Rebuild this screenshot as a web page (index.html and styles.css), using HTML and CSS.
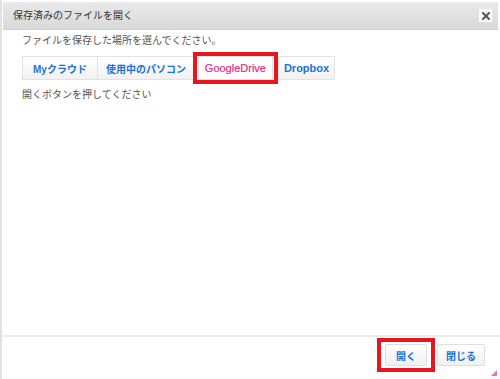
FILE: index.html
```html
<!DOCTYPE html>
<html lang="ja">
<head>
  <meta charset="UTF-8">
  <title>保存済みのファイルを開く</title>
  <link rel="stylesheet" href="styles.css">
</head>
<body>
  <div class="dialog">
    <div class="titlebar">
      <span class="title">保存済みのファイルを開く</span>
      <button class="close" title="閉じる">
        <svg width="8" height="8" viewBox="0 0 8 8">
          <path d="M1 1 L7 7 M7 1 L1 7" stroke="#555" stroke-width="2" stroke-linecap="square"/>
        </svg>
      </button>
    </div>

    <div class="content">
      <p class="lead">ファイルを保存した場所を選んでください。</p>
      <div class="tabs">
        <button class="tab">Myクラウド</button>
        <button class="tab pc">使用中のパソコン</button>
        <span class="mark">
          <button class="tab selected">GoogleDrive</button>
        </span>
        <button class="tab">Dropbox</button>
      </div>
      <p class="hint">開くボタンを押してください</p>
    </div>

    <div class="footer">
      <span class="mark">
        <button class="btn">開く</button>
      </span>
      <button class="btn">閉じる</button>
      <span class="grip"></span>
    </div>
  </div>
</body>
</html>
```

FILE: styles.css
```css
body {
  margin: 0;
  font-family: "Liberation Sans", "Noto Sans CJK JP", sans-serif;
  font-size: 10px;
  line-height: 14px;
  color: #555;
  background: #fff;
}

.dialog {
  height: 379px;
  border-left: 2px solid #e2e2e2;
  display: flex;
  flex-direction: column;
  box-sizing: border-box;
  position: relative;
}

.titlebar {
  margin: 2px 2px 0 1px;
  height: 27px;
  padding: 0 6px 0 10px;
  background: linear-gradient(#e9e9e9, #d9d9d9);
  border-bottom: 1px solid #d0d0d0;
  display: flex;
  align-items: center;
  justify-content: space-between;
}

.title {
  color: #333;
}

.close {
  width: 13px;
  height: 13px;
  padding: 0;
  border: none;
  background: #fafafa;
  display: flex;
  align-items: center;
  justify-content: center;
}

.content {
  flex: 1;
  padding: 4px 20px 0;
}

.lead {
  margin: 0 0 4px;
}

.tabs {
  display: flex;
  align-items: center;
}

.tab {
  height: 24px;
  padding: 0 10px;
  border: 1px solid #e2e2e2;
  background: linear-gradient(#fff, #f1f1f1);
  color: #1a73d9;
  font-family: inherit;
  font-size: 10px;
  font-weight: bold;
}

.tab + .tab {
  border-left: none;
}

.tab.pc {
  padding: 0 8px;
}

.tab.selected {
  width: 75px;
  padding: 0;
  background: #fff;
  color: #e8288a;
  font-size: 11px;
  font-weight: normal;
  -webkit-text-stroke: 0.2px #e8288a;
}

.mark {
  border: 4px solid #e8141e;
  display: inline-flex;
}

.tabs .mark {
  margin-left: -2px;
  padding: 0 1px;
}

.tabs .mark + .tab {
  border-left: 1px solid #e2e2e2;
  font-size: 11px;
  padding: 0 5px;
}

.hint {
  margin: 4px 0 0;
}

.footer {
  height: 44px;
  flex-shrink: 0;
  border-top: 2px solid #ececec;
  display: flex;
  align-items: flex-start;
  justify-content: flex-end;
  gap: 2px;
  padding: 1px 15px 0 0;
  box-sizing: border-box;
}

.btn {
  height: 22px;
  padding: 0 7px;
  border: 1px solid #ddd;
  border-radius: 2px;
  background: linear-gradient(#fff, #f0f0f0);
  color: #1a73d9;
  font-family: inherit;
  font-size: 10px;
  font-weight: bold;
}

.footer > .btn {
  width: 48px;
  margin-top: 6px;
}

.footer .mark {
  padding: 2px 4px;
}

.footer .mark .btn {
  width: 42px;
}

.grip {
  position: absolute;
  right: 3px;
  bottom: 3px;
  width: 0;
  height: 0;
  border-left: 6px solid transparent;
  border-bottom: 6px solid #f070c0;
}
```
